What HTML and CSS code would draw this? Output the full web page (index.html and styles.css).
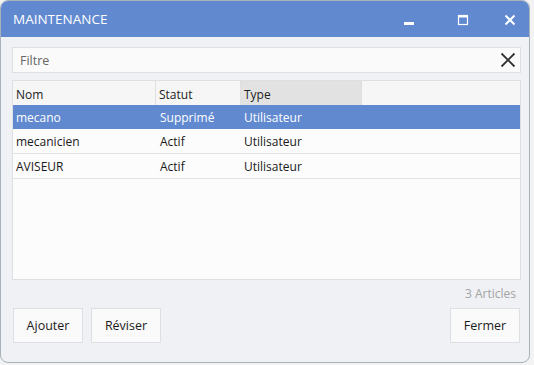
FILE: index.html
```html
<!DOCTYPE html>
<html>
<head>
<meta charset="utf-8">
<link rel="stylesheet" href="styles.css">
</head>
<body>
<div class="window">
  <div class="titlebar">
    <div class="title">MAINTENANCE</div>
    <div class="controls">
      <svg class="ctl" width="12" height="12" viewBox="0 0 12 12"><rect x="1" y="8" width="10" height="3" fill="#fff"/></svg>
      <svg class="ctl" width="12" height="12" viewBox="0 0 12 12"><rect x="1.5" y="1.5" width="9" height="9" fill="none" stroke="#fff" stroke-width="1.2"/><rect x="1" y="1" width="10" height="2.5" fill="#fff"/></svg>
      <svg class="ctl" width="12" height="12" viewBox="0 0 12 12"><path d="M1.5 1.5 L10.5 10.5 M10.5 1.5 L1.5 10.5" stroke="#fff" stroke-width="2"/></svg>
    </div>
  </div>
  <div class="content">
    <div class="filter">
      <span class="placeholder">Filtre</span>
      <svg class="clear" width="16" height="16" viewBox="0 0 16 16"><path d="M1.5 1.5 L14.5 14.5 M14.5 1.5 L1.5 14.5" stroke="#333" stroke-width="1.8"/></svg>
    </div>
    <div class="table">
      <div class="row head">
        <div class="c c1">Nom</div>
        <div class="c c2">Statut</div>
        <div class="c c3 sorted">Type</div>
        <div class="c c4"></div>
      </div>
      <div class="row sel">
        <div class="c c1">mecano</div>
        <div class="c c2">Supprimé</div>
        <div class="c c3">Utilisateur</div>
      </div>
      <div class="row">
        <div class="c c1">mecanicien</div>
        <div class="c c2">Actif</div>
        <div class="c c3">Utilisateur</div>
      </div>
      <div class="row">
        <div class="c c1">AVISEUR</div>
        <div class="c c2">Actif</div>
        <div class="c c3">Utilisateur</div>
      </div>
    </div>
    <div class="count">3 Articles</div>
    <div class="buttons">
      <button class="btn">Ajouter</button>
      <button class="btn">Réviser</button>
      <span class="spacer"></span>
      <button class="btn">Fermer</button>
    </div>
  </div>
</div>
</body>
</html>
```
FILE: styles.css
```css
* { box-sizing: border-box; }
html, body { margin: 0; padding: 0; background: #f3f3f3; }
body { font-family: "Open Sans", "Noto Sans", sans-serif; font-size: 12px; color: #1a1a1a; }
.window {
  width: 530px; height: 363px;
  border: 1px solid #a9b1ba;
  border-radius: 8px;
  overflow: hidden;
  background: #eff1f4;
  display: flex; flex-direction: column;
}
.titlebar {
  height: 36px; flex: none;
  background: #6089d0;
  display: flex; align-items: center;
  padding-left: 12px;
  color: #fff;
}
.title { font-size: 13.5px; letter-spacing: 0; margin-top: -1px; }
.controls { margin-left: auto; display: flex; align-items: center; }
.ctl { display: block; margin-top: 1px; }
.controls .ctl:nth-child(1) { margin-right: 42px; margin-top: 2px; }
.controls .ctl:nth-child(2) { margin-right: 35px; }
.controls .ctl:nth-child(3) { margin-right: 13px; }
.content { flex: 1; display: flex; flex-direction: column; padding: 10px 8px 0 11px; }
.filter {
  height: 26px; background: #fafafa; border: 1px solid #dcdfe3;
  display: flex; align-items: center; padding: 0 4px 0 7px;
}
.placeholder { color: #666; font-size: 12.5px; }
.clear { margin-left: auto; }
.table {
  margin-top: 7px; height: 200px;
  background: #fcfcfc; border: 1px solid #dcdfe3;
  display: flex; flex-direction: column;
}
.row { display: flex; height: 25px; border-bottom: 1px solid #e0e2e6; align-items: stretch; }
.row.head { height: 24px; background: #f6f6f6; border-bottom: none; }
.c { display: flex; align-items: center; padding-left: 3px; white-space: nowrap; }
.c1 { width: 143px; }
.c2 { width: 85px; }
.c3 { width: 121px; }
.c4 { flex: 1; }
.head .c { border-right: 1px solid #dfdfdf; padding-top: 2px; color: #222; }
.head .c4 { border-right: none; }
.head .sorted { background: #e2e2e2; }
.row.sel { background: #6089d0; color: #fff; border-bottom: none; height: 24px; }
.row:not(.head) .c1 { padding-left: 3px; }
.row:not(.head) .c2 { padding-left: 4px; }
.count { text-align: right; color: #a3a3a3; padding-right: 5px; margin-top: 5px; height: 18px; line-height: 18px; }
.buttons { display: flex; margin-top: 5px; gap: 8px; padding-left: 1px; padding-right: 1px; }
.spacer { flex: 1; }
.btn {
  width: 70px; height: 35px;
  background: #fafafa; border: 1px solid #dcdfe3;
  font-family: inherit; font-size: 12.5px; color: #1a1a1a;
  padding: 0; margin: 0;
}
```
